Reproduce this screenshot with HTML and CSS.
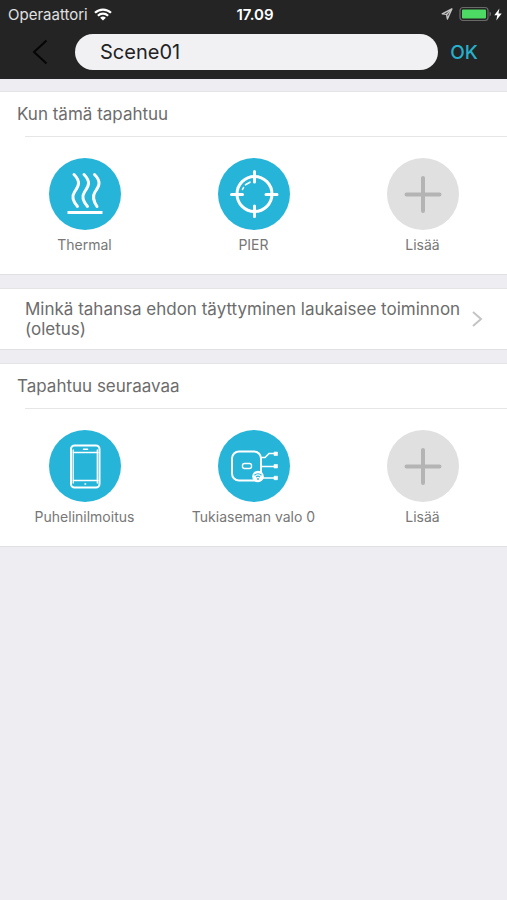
FILE: index.html
```html
<!DOCTYPE html>
<html lang="fi">
<head>
<meta charset="utf-8">
<meta name="viewport" content="width=device-width, initial-scale=1">
<title>Scene01</title>
<link rel="stylesheet" href="styles.css">
</head>
<body>
<header class="top">
  <div class="status">
    <div class="carrier">
      <span>Operaattori</span>
      <svg width="18" height="13" viewBox="0 0 18 13" fill="none" stroke="#fff" stroke-width="2.2" aria-hidden="true">
        <path d="M1 4.8a11.5 11.5 0 0 1 16 0M3.9 7.8a7.3 7.3 0 0 1 10.2 0"/>
        <path d="M9 12.6 6.1 9.8a4.2 4.2 0 0 1 5.8 0z" fill="#fff" stroke="none"/>
      </svg>
    </div>
    <time class="clock">17.09</time>
    <div class="indicators">
      <svg width="12" height="12" viewBox="0 0 12 12" fill="none" stroke="#c4c4c4" stroke-width="1.4" stroke-linejoin="round" aria-hidden="true">
        <path d="M10.8 1 1.2 5.8l4.4.6.8 4.6z"/><path d="M10.8 1 5.6 6.4"/>
      </svg>
      <svg width="33" height="16" viewBox="0 0 33 16" aria-hidden="true">
        <rect x="1" y="1.5" width="28" height="13" rx="3" fill="none" stroke="#6a6a6a" stroke-width="1.2"/>
        <rect x="3" y="3.5" width="24" height="9" rx="1" fill="#4cd964"/>
        <path d="M30.5 5.5c2 .8 2 4.200 0 5z" fill="#6a6a6a"/>
      </svg>
      <svg width="8" height="13" viewBox="0 0 8 13" fill="#fff" aria-hidden="true"><path d="M5.400.5.3 7.300h3L2.300 12.500 7.700 5.400H4.500z"/></svg>
    </div>
  </div>
  <nav class="bar">
    <button class="back" type="button" aria-label="Takaisin">
      <svg width="16" height="26" viewBox="0 0 16 26" fill="none" stroke="#050505" stroke-width="2" aria-hidden="true"><path d="M14.500 1.500 2 13l12.500 11.500"/></svg>
    </button>
    <input class="name" type="text" value="Scene01" aria-label="Nimi">
    <button class="ok" type="button">OK</button>
  </nav>
</header>
<main>
  <section class="card">
    <h2 class="title">Kun tämä tapahtuu</h2>
    <div class="grid">
      <button class="item" type="button">
        <svg class="disc" viewBox="0 0 72 72" fill="none" stroke="#fff" stroke-width="3" stroke-linecap="round" aria-hidden="true">
          <path d="M25 16.500c8 8 3.500 13 .5 17.500s-1 10 3 14.500M35 16.500c8 8 3.500 13 .5 17.500s-1 10 3 14.500M45.500 16.500c8 8 3.500 13 .5 17.500s-1 10 2 14.500"/>
          <path d="M20 54.500h32" stroke-linecap="square"/>
        </svg>
        <span class="label">Thermal</span>
      </button>
      <button class="item" type="button">
        <svg class="disc" viewBox="0 0 72 72" fill="none" stroke="#fff" stroke-width="3" stroke-linecap="round" aria-hidden="true">
          <circle cx="36.500" cy="36" r="17.500"/>
          <path d="M36.500 13.500V24M36.500 48v10.500M13.500 36.500h11M48 36.500h11"/>
          <path d="M24.500 31.500l1-2M27.500 26.800l4.500-2.600" stroke-width="1.600"/>
        </svg>
        <span class="label">PIER</span>
      </button>
      <button class="item" type="button">
        <svg class="disc add" viewBox="0 0 72 72" fill="none" stroke="#b4b4b4" stroke-width="4" stroke-linecap="round" aria-hidden="true"><path d="M36 20v33M19.500 36.500h33"/></svg>
        <span class="label">Lisää</span>
      </button>
    </div>
  </section>
  <button class="card rule" type="button">
    <span>Minkä tahansa ehdon täyttyminen laukaisee toiminnon (oletus)</span>
    <svg width="12" height="18" viewBox="0 0 12 18" fill="none" stroke="#c4c4c6" stroke-width="2" aria-hidden="true"><path d="M2 2l8 7-8 7"/></svg>
  </button>
  <section class="card">
    <h2 class="title">Tapahtuu seuraavaa</h2>
    <div class="grid">
      <button class="item" type="button">
        <svg class="disc" viewBox="0 0 72 72" fill="none" stroke="#fff" stroke-width="2" stroke-linecap="round" aria-hidden="true">
          <rect x="22" y="15.500" width="28.500" height="42" rx="3.500"/>
          <path d="M24 22.500h25M24 50.500h25M24.200 20v33M48.300 20v33" stroke-width="1.300"/>
          <path d="M34.500 19.300h4M36 54h.6" stroke-width="1.600"/>
        </svg>
        <span class="label">Puhelinilmoitus</span>
      </button>
      <button class="item" type="button">
        <svg class="disc" viewBox="0 0 72 72" fill="none" stroke="#fff" stroke-width="2" aria-hidden="true">
          <rect x="14" y="21.500" width="29" height="29" rx="7"/>
          <rect x="24.500" y="33.500" width="9" height="5" rx="2" stroke-width="1.400"/>
          <path d="M43 27.500h4l4-4h6M43 36.500h14M44 48h13" stroke-width="1.600"/>
          <path d="M56 22h3.500v3.500H56zM56 34.500h3.500V38H56zM56 46.200h3.500v3.500H56z" fill="#fff" stroke-width=".6"/>
          <circle cx="40" cy="46.500" r="5.800" fill="#fff" stroke="none"/>
          <path d="M36.500 45.200a5.200 5.200 0 0 1 7 0M38 47.100a3 3 0 0 1 4 0" stroke="#26b4d8" stroke-width="1.200"/>
          <circle cx="40" cy="49" r=".9" fill="#26b4d8" stroke="none"/>
        </svg>
        <span class="label">Tukiaseman valo 0</span>
      </button>
      <button class="item" type="button">
        <svg class="disc add" viewBox="0 0 72 72" fill="none" stroke="#b4b4b4" stroke-width="4" stroke-linecap="round" aria-hidden="true"><path d="M36 20v33M19.500 36.500h33"/></svg>
        <span class="label">Lisää</span>
      </button>
    </div>
  </section>
</main>
</body>
</html>
```
FILE: styles.css
```css
* { box-sizing: border-box; }
body {
  margin: 0;
  background: #eeedf2;
  color: #6c6c6c;
  font-family: Inter, "Liberation Sans", sans-serif;
}
button {
  border: 0;
  padding: 0;
  background: none;
  color: inherit;
  font: inherit;
  cursor: pointer;
}
svg { display: block; flex: none; }

.top { background: #242424; color: #fff; }
.status {
  display: grid;
  grid-template-columns: 1fr auto 1fr;
  align-items: center;
  height: 28px;
  padding: 0 5px 0 8px;
  font-size: 15px;
}
.carrier, .indicators { display: flex; align-items: center; gap: 6px; color: #e0e0e0; }
.indicators { justify-content: flex-end; }
.indicators svg:last-child { margin-left: -4px; }
.clock { font-weight: 600; }

.bar { display: flex; align-items: center; padding: 6px 0 9px; }
.back { display: flex; justify-content: center; width: 75px; padding: 5px 0 5px 4px; }
.name {
  flex: 1;
  min-width: 0;
  height: 36px;
  border: 0;
  border-radius: 18px;
  padding: 0 25px;
  background: #f1f1f4;
  color: #222;
  font: 20px Inter, "Liberation Sans", sans-serif;
}
.ok { width: 69px; padding-right: 17px; color: #26b0cc; font-size: 19px; font-weight: 500; }

main { display: flex; flex-direction: column; gap: 13px; padding-top: 12px; }
.card {
  border-top: 1px solid #e4e4e7;
  border-bottom: 1px solid #e0e0e3;
  background: #fff;
}
.title {
  margin: 0;
  padding: 11px 17px 12px;
  font-size: 17px;
  font-weight: 400;
  line-height: 22px;
}
.title::after {
  content: "";
  display: block;
  height: 1px;
  margin: 11px -17px -12px 8px;
  background: #e6e6e6;
}
.grid {
  display: grid;
  grid-template-columns: repeat(3, 1fr);
  padding: 21px 0 19px;
}
.item { display: flex; flex-direction: column; align-items: center; gap: 5px; }
.disc { width: 72px; height: 72px; border-radius: 50%; background: #26b4d8; }
.add { background: #e0e0e0; }
.label { font-size: 14px; line-height: 20px; color: #777; }

.rule {
  display: flex;
  align-items: center;
  justify-content: space-between;
  gap: 8px;
  padding: 10px 24px 10px 25px;
  font-size: 17px;
  line-height: 20px;
  text-align: left;
}
```
